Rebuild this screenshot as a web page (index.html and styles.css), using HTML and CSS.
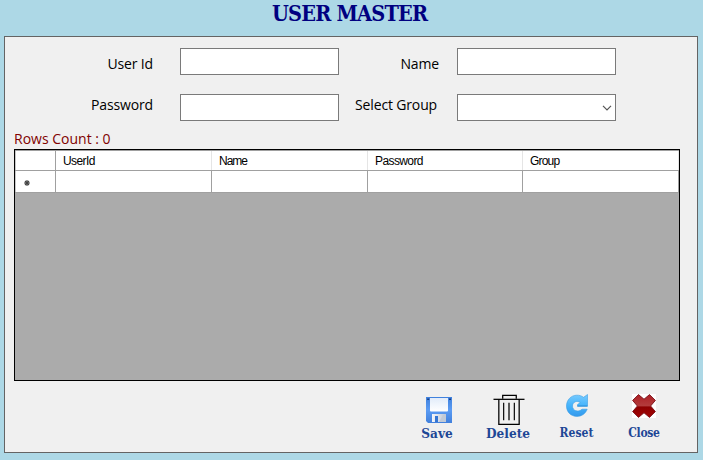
FILE: index.html
```html
<!DOCTYPE html>
<html lang="en">
<head>
<meta charset="utf-8">
<title>User Master</title>
<link rel="stylesheet" href="styles.css">
</head>
<body>
<h1 class="title">USER MASTER</h1>
<main class="panel">
  <form class="fields">
    <label class="label label-user" for="user">User Id</label>
    <input class="field" id="user" type="text">
    <label class="label label-name" for="name">Name</label>
    <input class="field" id="name" type="text">
    <label class="label label-pass" for="pass">Password</label>
    <input class="field" id="pass" type="text">
    <label class="label label-group" for="group">Select Group</label>
    <div class="field combo" id="group">
      <svg width="10" height="6" viewBox="0 0 10 6"><path d="M1 .8 5 4.8 9 .8" fill="none" stroke="#555" stroke-width="1.2"/></svg>
    </div>
  </form>
  <div class="count"><span>Rows Count : 0</span></div>
  <section class="grid">
    <div class="row head">
      <div class="cell"></div>
      <div class="cell"><span class="h-user">UserId</span></div>
      <div class="cell"><span class="h-name">Name</span></div>
      <div class="cell"><span class="h-pass">Password</span></div>
      <div class="cell"><span class="h-group">Group</span></div>
    </div>
    <div class="row entry">
      <div class="cell marker">
        <svg width="6" height="6" viewBox="0 0 6 6"><path d="M3 0V6M0 3H6M1 1 5 5M5 1 1 5" stroke="#444" stroke-width="1.1"/></svg>
      </div>
      <div class="cell"></div>
      <div class="cell"></div>
      <div class="cell"></div>
      <div class="cell"></div>
    </div>
  </section>
  <nav class="actions">
    <div class="action save">
      <svg width="26" height="26" viewBox="0 0 26 26">
        <defs>
          <linearGradient id="disk" x2="0" y2="1"><stop stop-color="#3f80dc"/><stop offset=".5" stop-color="#5b9cf4"/><stop offset="1" stop-color="#4180dc"/></linearGradient>
          <linearGradient id="paper" x2="0" y2="1"><stop stop-color="#e2ecfa"/><stop offset="1" stop-color="#fff"/></linearGradient>
          <linearGradient id="metal"><stop stop-color="#f4f6fa"/><stop offset="1" stop-color="#bcc5d3"/></linearGradient>
        </defs>
        <path d="M0 0H26V26H2L0 24Z" fill="url(#disk)"/>
        <path d="M1.2 1.5H3.2V3H1.2ZM23 1.5H25V3H23Z" fill="#173e83"/>
        <path d="M4 1H22V13.5Q22 14.5 21 14.5H5Q4 14.5 4 13.5Z" fill="url(#paper)"/>
        <path d="M6 17H20V25H6Z" fill="url(#metal)"/>
        <path d="M9 19H12V25H9Z" fill="#3475d2"/>
        <path d="M13 25 17 18H20V25Z" fill="#c1cad7"/>
      </svg>
      <span>Save</span>
    </div>
    <div class="action delete">
      <svg width="32" height="32" viewBox="0 0 32 32" fill="none" stroke="#000">
        <path d="M0 5.5H32" stroke-width="1.3"/>
        <path d="M9.5 5V1.5H23.5V5M5.5 5.5V31.3H26.5V5.5" stroke-width="1.3"/>
        <path d="M10.5 9V27M21.5 9V27" stroke-width="1.2"/>
        <path d="M16 9V27" stroke="#555" stroke-width="2"/>
      </svg>
      <span>Delete</span>
    </div>
    <div class="action reset">
      <svg width="22" height="23" viewBox="0 0 22 23">
        <defs><linearGradient id="turn" x2="0" y2="1"><stop stop-color="#77cbff"/><stop offset=".55" stop-color="#43b2fb"/><stop offset="1" stop-color="#3499ec"/></linearGradient></defs>
        <path d="M17.6 3.3 21.5.5V12.3H11.5V10.6L14.3 8.6C11 6 6.5 8 6.5 12 6.5 17 12.5 18.5 16 15.2H21.2C19.5 19.6 15.8 22.4 11 22.4 4.8 22.4.5 18 .5 12 .5 6 5 1.3 10.7 1.2 13.4 1.1 15.7 1.9 17.6 3.3Z" fill="url(#turn)" stroke="#3c9de4" stroke-width=".6"/>
        <path d="M11.5 12H21.3" stroke="#2685d2" stroke-width=".8"/>
      </svg>
      <span>Reset</span>
    </div>
    <div class="action close">
      <svg width="24" height="24" viewBox="0 0 24 24">
        <defs><linearGradient id="cross" x2="0" y2="1"><stop stop-color="#ae2025"/><stop offset=".48" stop-color="#b33b3b"/><stop offset=".55" stop-color="#8e0000"/><stop offset="1" stop-color="#a30505"/></linearGradient></defs>
        <path d="M0 0H24V24H0Z" fill="#fff"/>
        <path d="M6.5.6 12 5.2 17.5.6 23.4 6.4 18.6 12 23.4 17.6 17.5 23.4 12 18.8 6.5 23.4.6 17.6 5.4 12 .6 6.4Z" fill="url(#cross)" stroke="#781018" stroke-width=".9" stroke-linejoin="round"/>
      </svg>
      <span>Close</span>
    </div>
  </nav>
</main>
</body>
</html>
```
FILE: styles.css
```css
* { box-sizing: border-box; }
body {
  margin: 0;
  height: 460px;
  overflow: hidden;
  background: #add8e6;
  font-family: "Open Sans", sans-serif;
}
svg { display: block; }
.title {
  margin: 0 0 0 272px;
  height: 36px;
  font: bold 21.5px/27px "DejaVu Serif Condensed", "DejaVu Serif", serif;
  font-stretch: condensed;
  letter-spacing: -0.8px;
  color: #000080;
  white-space: nowrap;
}
.panel {
  width: 694px;
  height: 417px;
  margin-left: 4px;
  padding: 11px 0 0 9px;
  background: #f0f0f0;
  border: 1px solid #646464;
}
.fields {
  display: grid;
  grid-template-columns: 166px 159px 118px 159px;
  grid-template-rows: 27px 27px;
  row-gap: 19px;
}
.label {
  font-size: 14px;
  line-height: 20px;
  letter-spacing: -0.15px;
  color: #000;
  white-space: nowrap;
  justify-self: end;
}
.label-user { margin: 6px 27px 0 0; }
.label-name { margin: 6px 18px 0 0; }
.label-pass { margin: 1px 27px 0 0; }
.label-group { margin: 1px 20px 0 0; }
.field {
  width: 159px;
  height: 27px;
  margin: 0;
  padding: 0 4px;
  border: 1px solid #7a7a7a;
  border-radius: 0;
  background: #fff;
}
.combo {
  display: flex;
  justify-content: flex-end;
  align-items: center;
  padding: 1px 3px 0 0;
}
.count {
  height: 28px;
  padding-top: 8px;
  font-size: 14px;
  line-height: 20px;
  color: #800000;
}
.grid {
  width: 666px;
  height: 232px;
  border: 1px solid #000;
  background: #ababab;
}
.row {
  display: grid;
  grid-template-columns: 41px 156px 156px 155px 156px;
  border-bottom: 1px solid #a0a0a0;
  background: #fff;
}
.head { height: 21px; border-top: 1px solid #a0a0a0; }
.entry { height: 22px; }
.cell {
  border-right: 1px solid #a0a0a0;
  padding-left: 7px;
  font: 12px/19px "Liberation Sans", sans-serif;
  letter-spacing: -0.6px;
  white-space: nowrap;
}
.head .cell { padding-top: 1px; line-height: 18px; }
.h-name { letter-spacing: -1px; }
.h-group { letter-spacing: -0.8px; }
.cell:first-child { border-left: 1px solid #c8c8c8; }
.head .cell:not(:first-child) { border-right-color: #e5e5e5; }
.entry .marker { padding: 9px 0 0 8px; }
.actions {
  display: grid;
  grid-template-columns: 72px 70px 68px 66px;
  margin: 13px 0 0 387px;
}
.action {
  display: flex;
  flex-direction: column;
  align-items: center;
  height: 47px;
  font: bold 13.5px/16px "DejaVu Serif Condensed", "DejaVu Serif", serif;
  font-stretch: condensed;
  color: #1e4796;
}
.action span { margin-top: auto; white-space: nowrap; }
.save svg { margin: 3px 0 0 4px; }
.delete svg { margin-left: 2px; }
.reset, .close { font-size: 12px; }
.reset span { margin-right: 1px; }
.close span { letter-spacing: -0.3px; }
.close svg { margin-right: 1px; }
```
